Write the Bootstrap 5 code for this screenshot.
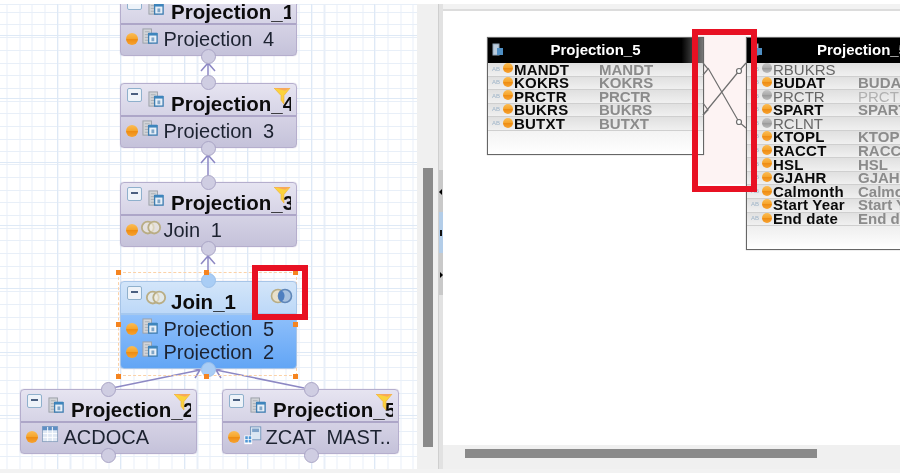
<!DOCTYPE html>
<html lang="en"><head><meta charset="utf-8"><title>Calculation view</title>
<link href="https://cdn.jsdelivr.net/npm/bootstrap@5.3.0/dist/css/bootstrap.min.css" rel="stylesheet">
<style>
html,body{height:100%;margin:0;background:#fff;overflow:hidden}
.screen{width:900px;height:473px;border-top:4px solid #fff;background:#f2f2f2;font-family:"Liberation Sans",Arial,sans-serif;color:#111;filter:blur(.35px)}
.stage{height:465px}
.canvas-pane{width:417px;position:relative;overflow:hidden;background-color:#fff;
 background-image:
 repeating-linear-gradient(90deg,transparent 0 57px,#deE9f6 57px 58px,transparent 58px 63.5px),
 repeating-linear-gradient(0deg,transparent 0 62.5px,#dee9f6 62.5px 63.5px),
 repeating-linear-gradient(90deg,#e8eff8 0 1px,transparent 1px 12.7px),
 repeating-linear-gradient(0deg,#e8eff8 0 1px,transparent 1px 12.7px);
 background-position:0 0,0 10px,6.5px 0,0 1px}
.flow-node{position:absolute;width:177px;border:1.5px solid #b5aecd;border-radius:4px;background:linear-gradient(#e6e4f1,#c5c2da);box-shadow:0 0 1px #a9a3c6}
.flow-node.is-active{border-color:#a7c5e8;background:linear-gradient(#d3e5f9 0,#bcd8f8 37%,#8fc0fb 39%,#62a5f5 100%)}
.node-head{height:33px;border-bottom:2px solid #ada6c8;padding:4px 5.5px 0 5.5px;position:relative;overflow:hidden}
.is-active .node-head{border-bottom-color:#a5c8ef}
.head-title{font-weight:700;font-size:20.5px;line-height:26px;margin-top:3px;white-space:nowrap;color:#0c0c0c;min-width:0;overflow:hidden}
.collapse-box{width:15px;height:14px;flex:none;border:1.5px solid #8fb0cc;border-radius:2px;background:#eef3f9;position:relative}
.collapse-box::after{content:"";position:absolute;left:3px;right:3px;top:4px;height:2px;background:#4a5f80}
.head-icon{width:29.5px;flex:none;padding-top:3px}
.node-body{padding-bottom:7px}
.node-row{height:19px;flex:none;margin:3px 0 1px;padding-left:5px;font-size:20px;line-height:23px;white-space:nowrap;word-spacing:5px;overflow:hidden;color:#1c2230}
.row-icon{width:25.5px;flex:none}
.node-row .ball{margin-top:5px}
.ball{width:12px;height:12px;border-radius:50%;flex:none;background:linear-gradient(#fbbc55 0,#f6a52c 48%,#ee8c12 52%,#f7a331 100%)}
.ball-grey{background:linear-gradient(#c5c5c5 0,#aaa 48%,#999 52%,#bbb 100%)}
.funnel{position:absolute;right:5px;top:4px}
.port{position:absolute;width:15px;height:15px;border-radius:50%;background:#cfcde2;border:1.5px solid #aaa5c6}
.port-blue{background:#a9cdf5;border-color:#9cc0ea}
.handle{position:absolute;width:5px;height:5px;background:#f5841f}
.sel-frame{position:absolute;left:118px;top:268px;width:179px;height:104px;border:1px dashed #fbd2a8}
.wires{position:absolute;left:0;top:0}
.red-frame{position:absolute;border:6px solid #e81123}
.join-mark{position:absolute;left:270px;top:283px}
.scroll-gutter{width:26px;background:#f0f0f0;position:relative}
.v-thumb{position:absolute;left:6px;top:164px;width:10px;height:279px;background:#8a8a8a}
.sash{position:absolute;left:21px;top:0;bottom:0;width:5px;background:#e2e2e2;border-left:1px solid #cfcfcf}
.fold{position:absolute;left:22px;width:4px;background:#c9c9c9}
.fold-blue{background:#b3cde8}
.fold i{position:absolute;top:19px;width:0;height:0;border:3px solid transparent}
.arrow-left{border-right-color:#000!important;left:-3px}
.arrow-right{border-left-color:#000!important;left:1px}
.arrow-grip{background:#111;width:2px!important;height:6px!important;border:0!important;left:1px;top:18px!important}
.detail-pane{flex:1;position:relative;overflow:hidden;background:#fff;border-top:2px solid #dcdcdc;margin-top:5px}
.detail-body{height:434px;position:relative;overflow:hidden}
.h-scroll{height:24px;background:#f0f0f0;position:relative}
.h-thumb{position:absolute;left:22px;top:4px;width:352px;height:9px;background:#8a8a8a}
.entity{position:absolute;border:1.5px solid #666;box-shadow:0 0 1px #999;overflow:hidden}
.entity-one{left:44px;top:26px;width:217px;height:118px;background:linear-gradient(#e8e8e8 60%,#fff 100%)}
.entity-two{left:303px;top:26px;width:220px;height:213px;background:linear-gradient(#e8e8e8 85%,#fff 100%)}
.entity-head{height:25px;background:#000;color:#fff;font-weight:700;font-size:15px;line-height:24px;position:relative;text-align:center}
.entity-one .entity-head{background:linear-gradient(90deg,#000 90%,#777 100%)}
.entity-two .entity-head{padding-left:70px;text-align:left}
.entity-head svg{position:absolute;left:4px;top:5px}
.field{height:13.6px;line-height:13.6px;font-size:15px;font-weight:700;white-space:nowrap;border-bottom:1px solid #cfcfcf;background:linear-gradient(#e0e0e0,#f0f0f0);color:#0a0a0a;padding-left:4px;overflow:hidden}
.field .ab{width:10px;flex:none;font-size:6px;font-weight:400;color:#9fb5c9;margin-right:1px;letter-spacing:0}
.field .ball{width:10px;height:10px;margin:0 1px 0 0;position:relative;top:-1px}
.field .fname{width:85px;flex:none;letter-spacing:.2px}
.field .fmap{color:#8b8b8b}
.field.off .fname{color:#666;font-weight:400;letter-spacing:0}
.field.off .fmap{color:#b0b0b0;font-weight:400}
.link-band{position:absolute;left:255px;top:23px;width:48px;height:150px;background:#fdf3f3}
.link-svg{position:absolute;left:0;top:0}
</style></head><body>
<svg width="0" height="0" class="position-absolute">
<defs>
<symbol id="i-proj" viewBox="0 0 18 18"><rect x="1" y="1" width="9" height="15" fill="#d2d4d8" stroke="#9aa0a8"/><path d="M3 4h5M3 7h5M3 10h5M3 13h5" stroke="#a9afb6"/><rect x="7" y="6" width="9" height="10" fill="#e8f0f8" stroke="#3d7db0" stroke-width="1.4"/><rect x="7" y="5" width="9" height="3" fill="#3d85bd"/><rect x="10" y="10" width="3" height="4" fill="#7fa6c8"/></symbol>
<symbol id="i-join" viewBox="0 0 24 18"><circle cx="8.5" cy="9" r="6.5" fill="#f4efe0" fill-opacity=".6" stroke="#b9ad84" stroke-width="2"/><circle cx="15.5" cy="9" r="6.5" fill="#f4efe0" fill-opacity=".6" stroke="#b9ad84" stroke-width="2"/></symbol>
<symbol id="i-join2" viewBox="0 0 24 18"><circle cx="8" cy="9" r="6.5" fill="#e8e0cc" stroke="#b9ad84" stroke-width="1.6"/><circle cx="15" cy="9" r="6.5" fill="#a9c2e0" stroke="#5f86b8" stroke-width="1.6"/><path d="M11.5 3.5A6.5 6.5 0 0 1 11.5 14.5A6.5 6.5 0 0 1 11.5 3.5Z" fill="#4f7fc0"/></symbol>
<symbol id="i-funnel" viewBox="0 0 18 18"><path d="M0 0H17L10.5 8V17L7.5 13V8Z" fill="#fbd33c" stroke="#f2b43a" stroke-width=".8"/><path d="M0 0H17L12 3Z" fill="#f7a85a"/></symbol>
<symbol id="i-table" viewBox="0 0 18 18"><rect x=".5" y=".5" width="16" height="16" fill="#dfe8f4" stroke="#8fa6c2"/><rect x=".5" y=".5" width="16" height="4" fill="#5f8fc4"/><path d="M6 1v15M11 1v15M1 8h15M1 12h15" stroke="#fff"/></symbol>
<symbol id="i-calc" viewBox="0 0 22 22"><rect x="8" y="1" width="12" height="15" fill="#dbe6f2" stroke="#6f93b8"/><rect x="10" y="3" width="8" height="4" fill="#7fa3c9"/><path d="M1 11h9v10H1z" fill="#fff"/><path d="M2 12h3v3H2zM6 12h3v3H6zM2 16h3v3H2zM6 16h3v3H6z" fill="#4f97d6"/></symbol>
<symbol id="i-doc" viewBox="0 0 12 14"><rect x="1" y="1" width="6" height="11" fill="#bcd" stroke="#8fa3b6"/><rect x="5" y="5" width="6" height="7" fill="#4f8fc4"/></symbol>
</defs></svg>

<div class="screen">
<div class="stage d-flex">
 <section class="canvas-pane">
  <svg class="wires" width="417" height="465" fill="none" stroke="#8d88c4" stroke-width="1.5">
   <path d="M208 52V80M201 67l7-8 7 8"/>
   <path d="M208 145V178M201 159l7-8 7 8"/>
   <path d="M208 244V278M201 260l7-8 7 8"/>
   <path d="M200 366L112 384M216 366L304 384M184 362l16 4-5 8M232 362l-16 4 5 8"/>
  </svg>
  <div class="sel-frame"></div>

  <div class="flow-node" style="left:120px;top:-13px">
   <div class="node-head d-flex"><span class="collapse-box"></span><span class="head-icon d-flex justify-content-center"><svg width="17" height="17"><use href="#i-proj"/></svg></span><span class="head-title">Projection_1</span></div>
   <div class="node-body d-flex flex-column"><div class="node-row d-flex"><span class="ball"></span><span class="row-icon d-flex justify-content-center"><svg width="17" height="17"><use href="#i-proj"/></svg></span>Projection 4</div></div>
  </div>
  <div class="flow-node" style="left:120px;top:79px">
   <div class="node-head d-flex"><span class="collapse-box"></span><span class="head-icon d-flex justify-content-center"><svg width="17" height="17"><use href="#i-proj"/></svg></span><span class="head-title">Projection_4</span><svg class="funnel" width="17" height="17"><use href="#i-funnel"/></svg></div>
   <div class="node-body d-flex flex-column"><div class="node-row d-flex"><span class="ball"></span><span class="row-icon d-flex justify-content-center"><svg width="17" height="17"><use href="#i-proj"/></svg></span>Projection 3</div></div>
  </div>
  <div class="flow-node" style="left:120px;top:178px">
   <div class="node-head d-flex"><span class="collapse-box"></span><span class="head-icon d-flex justify-content-center"><svg width="17" height="17"><use href="#i-proj"/></svg></span><span class="head-title">Projection_3</span><svg class="funnel" width="17" height="17"><use href="#i-funnel"/></svg></div>
   <div class="node-body d-flex flex-column"><div class="node-row d-flex"><span class="ball"></span><span class="row-icon d-flex justify-content-center"><svg width="22" height="17"><use href="#i-join"/></svg></span>Join 1</div></div>
  </div>
  <div class="flow-node is-active" style="left:120px;top:277px">
   <div class="node-head d-flex"><span class="collapse-box"></span><span class="head-icon d-flex justify-content-center"><svg width="22" height="17"><use href="#i-join"/></svg></span><span class="head-title">Join_1</span></div>
   <div class="node-body d-flex flex-column"><div class="node-row d-flex"><span class="ball"></span><span class="row-icon d-flex justify-content-center"><svg width="17" height="17"><use href="#i-proj"/></svg></span>Projection 5</div>
   <div class="node-row d-flex"><span class="ball"></span><span class="row-icon d-flex justify-content-center"><svg width="17" height="17"><use href="#i-proj"/></svg></span>Projection 2</div></div>
  </div>
  <div class="flow-node" style="left:20px;top:385px">
   <div class="node-head d-flex"><span class="collapse-box"></span><span class="head-icon d-flex justify-content-center"><svg width="17" height="17"><use href="#i-proj"/></svg></span><span class="head-title">Projection_2</span><svg class="funnel" width="17" height="17"><use href="#i-funnel"/></svg></div>
   <div class="node-body d-flex flex-column"><div class="node-row d-flex"><span class="ball"></span><span class="row-icon d-flex justify-content-center"><svg width="17" height="17"><use href="#i-table"/></svg></span>ACDOCA</div></div>
  </div>
  <div class="flow-node" style="left:222px;top:385px">
   <div class="node-head d-flex"><span class="collapse-box"></span><span class="head-icon d-flex justify-content-center"><svg width="17" height="17"><use href="#i-proj"/></svg></span><span class="head-title">Projection_5</span><svg class="funnel" width="17" height="17"><use href="#i-funnel"/></svg></div>
   <div class="node-body d-flex flex-column"><div class="node-row d-flex"><span class="ball"></span><span class="row-icon d-flex justify-content-center"><svg width="22" height="19"><use href="#i-calc"/></svg></span>ZCAT MAST..</div></div>
  </div>

  <span class="port" style="left:200.5px;top:45px"></span>
  <span class="port" style="left:200.5px;top:71px"></span>
  <span class="port" style="left:200.5px;top:137px"></span>
  <span class="port" style="left:200.5px;top:171px"></span>
  <span class="port" style="left:200.5px;top:237px"></span>
  <span class="port port-blue" style="left:200.5px;top:269px"></span>
  <span class="port port-blue" style="left:200.5px;top:358px"></span>
  <span class="port" style="left:100.5px;top:378px"></span>
  <span class="port" style="left:303.5px;top:378px"></span>
  <span class="port" style="left:100.5px;top:444px"></span>
  <span class="port" style="left:303.5px;top:444px"></span>

  <span class="handle" style="left:116px;top:266px"></span>
  <span class="handle" style="left:204px;top:266px"></span>
  <span class="handle" style="left:293px;top:266px"></span>
  <span class="handle" style="left:116px;top:318px"></span>
  <span class="handle" style="left:293px;top:318px"></span>
  <span class="handle" style="left:116px;top:370px"></span>
  <span class="handle" style="left:204px;top:370px"></span>
  <span class="handle" style="left:293px;top:370px"></span>

  <svg class="join-mark" width="24" height="18"><use href="#i-join2"/></svg>
  <div class="red-frame" style="left:252px;top:261px;width:56px;height:55px"></div>
 </section>

 <aside class="scroll-gutter">
  <div class="v-thumb"></div>
  <div class="sash"></div>
  <div class="fold" style="top:166px;height:42px"><i class="arrow-left"></i></div>
  <div class="fold fold-blue" style="top:208px;height:41px"><i class="arrow-grip"></i></div>
  <div class="fold" style="top:249px;height:42px"><i class="arrow-right"></i></div>
 </aside>

 <main class="detail-pane d-flex flex-column">
  <div class="detail-body">
   <div class="link-band"></div>
   <div class="entity entity-one">
    <div class="entity-head"><svg width="12" height="14"><use href="#i-doc"/></svg>Projection_5</div>
    <div class="field d-flex align-items-center"><span class="ab">AB</span><span class="ball"></span><span class="fname">MANDT</span><span class="fmap">MANDT</span></div>
    <div class="field d-flex align-items-center"><span class="ab">AB</span><span class="ball"></span><span class="fname">KOKRS</span><span class="fmap">KOKRS</span></div>
    <div class="field d-flex align-items-center"><span class="ab">AB</span><span class="ball"></span><span class="fname">PRCTR</span><span class="fmap">PRCTR</span></div>
    <div class="field d-flex align-items-center"><span class="ab">AB</span><span class="ball"></span><span class="fname">BUKRS</span><span class="fmap">BUKRS</span></div>
    <div class="field d-flex align-items-center"><span class="ab">AB</span><span class="ball"></span><span class="fname">BUTXT</span><span class="fmap">BUTXT</span></div>
   </div>
   <div class="entity entity-two">
    <div class="entity-head"><svg width="12" height="14"><use href="#i-doc"/></svg>Projection_5</div>
    <div class="field off d-flex align-items-center"><span class="ab">AB</span><span class="ball ball-grey"></span><span class="fname">RBUKRS</span></div>
    <div class="field d-flex align-items-center"><span class="ab">AB</span><span class="ball"></span><span class="fname">BUDAT</span><span class="fmap">BUDAT</span></div>
    <div class="field off d-flex align-items-center"><span class="ab">AB</span><span class="ball ball-grey"></span><span class="fname">PRCTR</span><span class="fmap">PRCTR</span></div>
    <div class="field d-flex align-items-center"><span class="ab">AB</span><span class="ball"></span><span class="fname">SPART</span><span class="fmap">SPART</span></div>
    <div class="field off d-flex align-items-center"><span class="ab">AB</span><span class="ball ball-grey"></span><span class="fname">RCLNT</span></div>
    <div class="field d-flex align-items-center"><span class="ab">AB</span><span class="ball"></span><span class="fname">KTOPL</span><span class="fmap">KTOPL</span></div>
    <div class="field d-flex align-items-center"><span class="ab">AB</span><span class="ball"></span><span class="fname">RACCT</span><span class="fmap">RACCT</span></div>
    <div class="field d-flex align-items-center"><span class="ab">AB</span><span class="ball"></span><span class="fname">HSL</span><span class="fmap">HSL</span></div>
    <div class="field d-flex align-items-center"><span class="ab">AB</span><span class="ball"></span><span class="fname">GJAHR</span><span class="fmap">GJAHR</span></div>
    <div class="field d-flex align-items-center"><span class="ab">AB</span><span class="ball"></span><span class="fname">Calmonth</span><span class="fmap">Calmonth</span></div>
    <div class="field d-flex align-items-center"><span class="ab">AB</span><span class="ball"></span><span class="fname">Start Year</span><span class="fmap">Start Year</span></div>
    <div class="field d-flex align-items-center"><span class="ab">AB</span><span class="ball"></span><span class="fname">End date</span><span class="fmap">End date</span></div>
   </div>
   <svg class="link-svg" width="457" height="434" fill="none" stroke="#6f6f6f" stroke-width="1.2">
    <path d="M260 52L265 58L260 64M260 92L265 99L260 104"/>
    <path d="M265 57L296 111M260 104L296 60M296 60L303 52M296 111L303 117"/>
    <circle cx="296" cy="60" r="2.5" fill="#fff"/><circle cx="296" cy="111" r="2.5" fill="#fff"/>
   </svg>
   <div class="red-frame" style="left:249px;top:18px;width:65px;height:163px"></div>
  </div>
  <div class="h-scroll"><div class="h-thumb"></div></div>
 </main>
</div>
</div>
</body></html>
